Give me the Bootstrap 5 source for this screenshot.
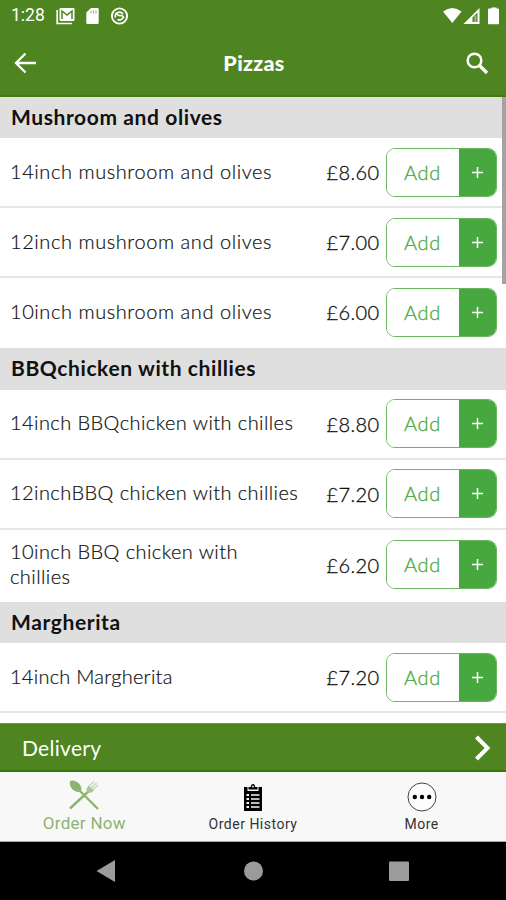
<!DOCTYPE html>
<html lang="en">
<head>
<meta charset="utf-8">
<meta name="viewport" content="width=device-width, initial-scale=1">
<title>Pizzas</title>
<link href="https://cdn.jsdelivr.net/npm/bootstrap@5.3.0/dist/css/bootstrap.min.css" rel="stylesheet">
<style>
  body { font-family: Lato, "Liberation Sans", sans-serif; color: #111; background: #fff; }
  .screen { width: 506px; height: 900px; }
  .brand-bg { background: #4e8520; }
  .status-row { height: 31px; padding: 0 7px 0 11px; font: 400 17.5px/31px Roboto, sans-serif; }
  .status-left { margin-left: 9px; }
  .title-row { height: 66px; padding: 0 17px 0 14px; border-bottom: 2px solid #437b0d; }
  .page-title { font-size: 21.5px; font-weight: 900; line-height: 24px; letter-spacing: .3px; padding-left: 6px; }
  .menu-area { height: 626px; }
  .group-head { height: 41.3px; background: #dfdfdf; padding: 0 11px 2px; font-size: 21px; font-weight: 700; color: #111; letter-spacing: .6px; }
  .item-row { height: 70px; padding: 0 9.5px 0 10px; border-bottom: 2px solid #e6e6e6; }
  .item-row.tall { height: 72.6px; }
  .item-row.last { border-color: #fff; }
  .item-name { width: 300px; font-size: 20px; font-weight: 300; line-height: 25px; letter-spacing: .57px; padding-bottom: 2px; -webkit-text-stroke: .2px #111; }
  .group-1 .item-name { letter-spacing: .42px; }
  .group-2 .item-name { letter-spacing: .25px; }
  .tall .item-name { width: 250px; }
  .item-price { font-size: 20px; font-weight: 300; letter-spacing: .4px; margin-right: 6px; -webkit-text-stroke: .3px #111; }
  .add-group { width: 111px; height: 49px; border: 1.5px solid #6bb560; border-radius: 9px; overflow: hidden; }
  .add-main { width: 72px; color: #48a943; font-size: 20px; font-weight: 300; letter-spacing: .7px; background: #fff; -webkit-text-stroke: .3px #48a943; padding-bottom: 1px; }
  .add-more { background: #46a83e; }
  .scroll-thumb { top: 0; right: 0; width: 4.5px; height: 187px; background: #a3a3a3; }
  .delivery { height: 49px; padding: 2px 15px 0 22px; border-bottom: 2px solid #347b08; border-top: 1px solid #6c9a4a; font-size: 21px; letter-spacing: .3px; }
  .tabs { height: 70px; background: #f8f8f8; border-bottom: 1px solid #aaa; font-family: Roboto, sans-serif; font-size: 14px; line-height: 18px; color: #333; letter-spacing: .5px; }
  .tabs .tab-on { color: #8eb371; font-size: 17px; letter-spacing: .3px; }
  .clipboard-icon { margin-top: 11px; margin-bottom: 4px; }
  .more-icon { margin-top: 10px; margin-bottom: 3px; }
  .fork-icon { margin-top: 8px; margin-bottom: 4px; }
  .sys-nav { height: 58px; background: #000; }
</style>
</head>
<body>
<div class="screen d-flex flex-column overflow-hidden">
  <header class="brand-bg text-white flex-shrink-0">
    <div class="status-row d-flex align-items-center">
      <span>1:28</span>
      <svg class="status-left" width="76" height="20" viewBox="0 0 76 20">
        <path d="M3.2 4v13.5H18" fill="none" stroke="#fff" stroke-width="1.7"/>
        <rect x="5.5" y="2" width="15" height="13" rx="1.2" fill="#fff"/>
        <path d="M8 13V5l5 4 5-4v8" fill="none" stroke="#4e8520" stroke-width="1.5"/>
        <path d="M37 2h6.5q1.2 0 1.2 1.2v13.6q0 1.2-1.2 1.2h-10q-1.2 0-1.2-1.2V6.5z" fill="#fff"/>
        <path d="M37 4.500v3M39.500 4.500v3M42 4.500v3" stroke="#8eb172"/>
        <circle cx="65.500" cy="10" r="7.600" fill="none" stroke="#fff" stroke-width="1.900"/>
        <path d="M61.500 11.500a4.200 4.200 0 0 1 7.500-3.500M69.500 10.500a4.200 4.200 0 0 1-6 3M61.500 7q3 3 5 2.500t3.500 2.500" fill="none" stroke="#fff" stroke-width="1.700"/>
      </svg>
      <svg class="ms-auto" width="56" height="20" viewBox="0 0 56 20">
        <path d="M0 5.500Q9.300-1.500 18.600 5.500L9.300 17z" fill="#fff"/>
        <path d="M20.500 18L36.500 2v16z" fill="#fff"/>
        <path d="M29.500 16V11.500L34.500 6.500V16z" fill="#4e8520"/><path d="M31.500 16v-5.500l1.700-1.500V16z" fill="#fff" opacity=".5"/>
        <path d="M46.500 2.500h2V1.500h5v1h1.500q1 0 1 1V17q0 1.200-1 1.200h-9q-1 0-1-1.200V3.500q0-1 1-1z" fill="#fff"/>
      </svg>
    </div>
    <div class="title-row d-flex justify-content-between align-items-center">
      <svg width="23" height="22" viewBox="0 0 23 22" fill="none" stroke="#fff" stroke-width="2.300"><path d="M22 11H2M11.500 1.500L2 11l9.500 9.500"/></svg>
      <h1 class="page-title m-0">Pizzas</h1>
      <svg width="24" height="24" viewBox="0 0 24 24" fill="none" stroke="#fff"><circle cx="9.500" cy="9.500" r="6.800" stroke-width="2.500"/><path d="M14.500 14.500l7.500 7.500" stroke-width="3.200"/></svg>
    </div>
  </header>

  <main class="menu-area position-relative overflow-hidden flex-shrink-0" id="menu">
    <div class="scroll-thumb position-absolute"></div>
  </main>

  <div class="delivery brand-bg text-white d-flex justify-content-between align-items-center flex-shrink-0">
    <span>Delivery</span>
    <svg width="17" height="26" viewBox="0 0 17 26" fill="none" stroke="#fff" stroke-width="4"><path d="M2.500 2L13.500 13 2.500 24"/></svg>
  </div>

  <nav class="tabs row g-0 text-center flex-shrink-0">
    <div class="col tab-on d-flex flex-column align-items-center">
      <svg class="fork-icon" width="30" height="30" viewBox="0 0 30 30">
        <path d="M9 9L29 29M22 9L1 28.500" stroke="#8eb371" stroke-width="2.400"/>
        <path d="M1 1Q6-1 10.500 4Q14 9 11 11.500Q7 13 3 9Q0 5 1 1z" fill="#8eb371"/>
        <path d="M19 7L25 1.500M21 9L27.500 3M23 10.500L29 5" stroke="#c4d7b5" stroke-width="1.500"/>
        <path d="M17.500 8.500L20 6l5 4.500-3 2.200h-4z" fill="#a9c593"/>
      </svg>
      <span>Order Now</span>
    </div>
    <div class="col d-flex flex-column align-items-center">
      <svg class="clipboard-icon" width="20" height="28" viewBox="0 0 20 28">
        <path d="M1 4h3.500V8h11V4H19v24H1z"/><path d="M5.500 6.500V4h2.300Q8 1 10 1t2.200 3h2.300v2.500z"/>
        <circle cx="10" cy="3.500" r=".9" fill="#f8f8f8"/>
        <path d="M3.500 12h2.500M3.500 16h2.500M3.500 20h2.500M3.500 24h2.500" stroke="#f8f8f8" stroke-width="2.200"/>
        <path d="M8 12h8.500M8 16h8.500M8 20h8.500M8 24h8.500" stroke="#f8f8f8" stroke-width="1.600"/>
      </svg>
      <span>Order History</span>
    </div>
    <div class="col d-flex flex-column align-items-center">
      <svg class="more-icon" width="30" height="30" viewBox="0 0 30 30"><circle cx="15" cy="15" r="14" fill="#fdfdfd" stroke="#444"/><circle cx="7.800" cy="15" r="2.200"/><circle cx="15" cy="15" r="2.200"/><circle cx="22.200" cy="15" r="2.200"/></svg>
      <span>More</span>
    </div>
  </nav>

  <div class="sys-nav flex-shrink-0">
    <svg class="d-block" width="506" height="58" viewBox="0 0 506 58" fill="#9b9b9b"><path d="M96.500 29L115 18v22z"/><circle cx="253.500" cy="29" r="9.500"/><rect x="389" y="19.500" width="20" height="19.500" rx="1"/></svg>
  </div>
</div>
<script src="https://cdn.jsdelivr.net/npm/bootstrap@5.3.0/dist/js/bootstrap.bundle.min.js"></script>
<script>
  const groups = [
    ["Mushroom and olives", [["14inch mushroom and olives", "£8.60"], ["12inch mushroom and olives", "£7.00"], ["10inch mushroom and olives", "£6.00"]]],
    ["BBQchicken with chillies", [["14inch BBQchicken with chilles", "£8.80"], ["12inchBBQ chicken with chillies", "£7.20"], ["10inch BBQ chicken with chillies", "£6.20", "tall"]]],
    ["Margherita", [["14inch Margherita", "£7.20"]]]
  ];
  const html = groups.map(([name, items], g) => `
    <section class="group-${g}"><h2 class="group-head d-flex align-items-center m-0">${name}</h2>` + items.map(([label, price, size], i) => `
    <div class="item-row ${size || ""} ${i === 2 ? "last" : ""} d-flex align-items-center">
      <div class="item-name">${label}</div>
      <div class="item-price ms-auto">${price}</div>
      <div class="add-group d-flex flex-shrink-0">
        <div class="add-main d-flex align-items-center justify-content-center">Add</div>
        <div class="add-more flex-fill d-flex align-items-center justify-content-center">
          <svg width="11" height="11" viewBox="0 0 11 11" stroke="#fff" stroke-width="1.500"><path d="M0 5.500h11M5.500 0v11"/></svg>
        </div>
      </div>
    </div>`).join("") + "</section>").join("");
  document.getElementById("menu").insertAdjacentHTML("afterbegin", html);
</script>
</body>
</html>
